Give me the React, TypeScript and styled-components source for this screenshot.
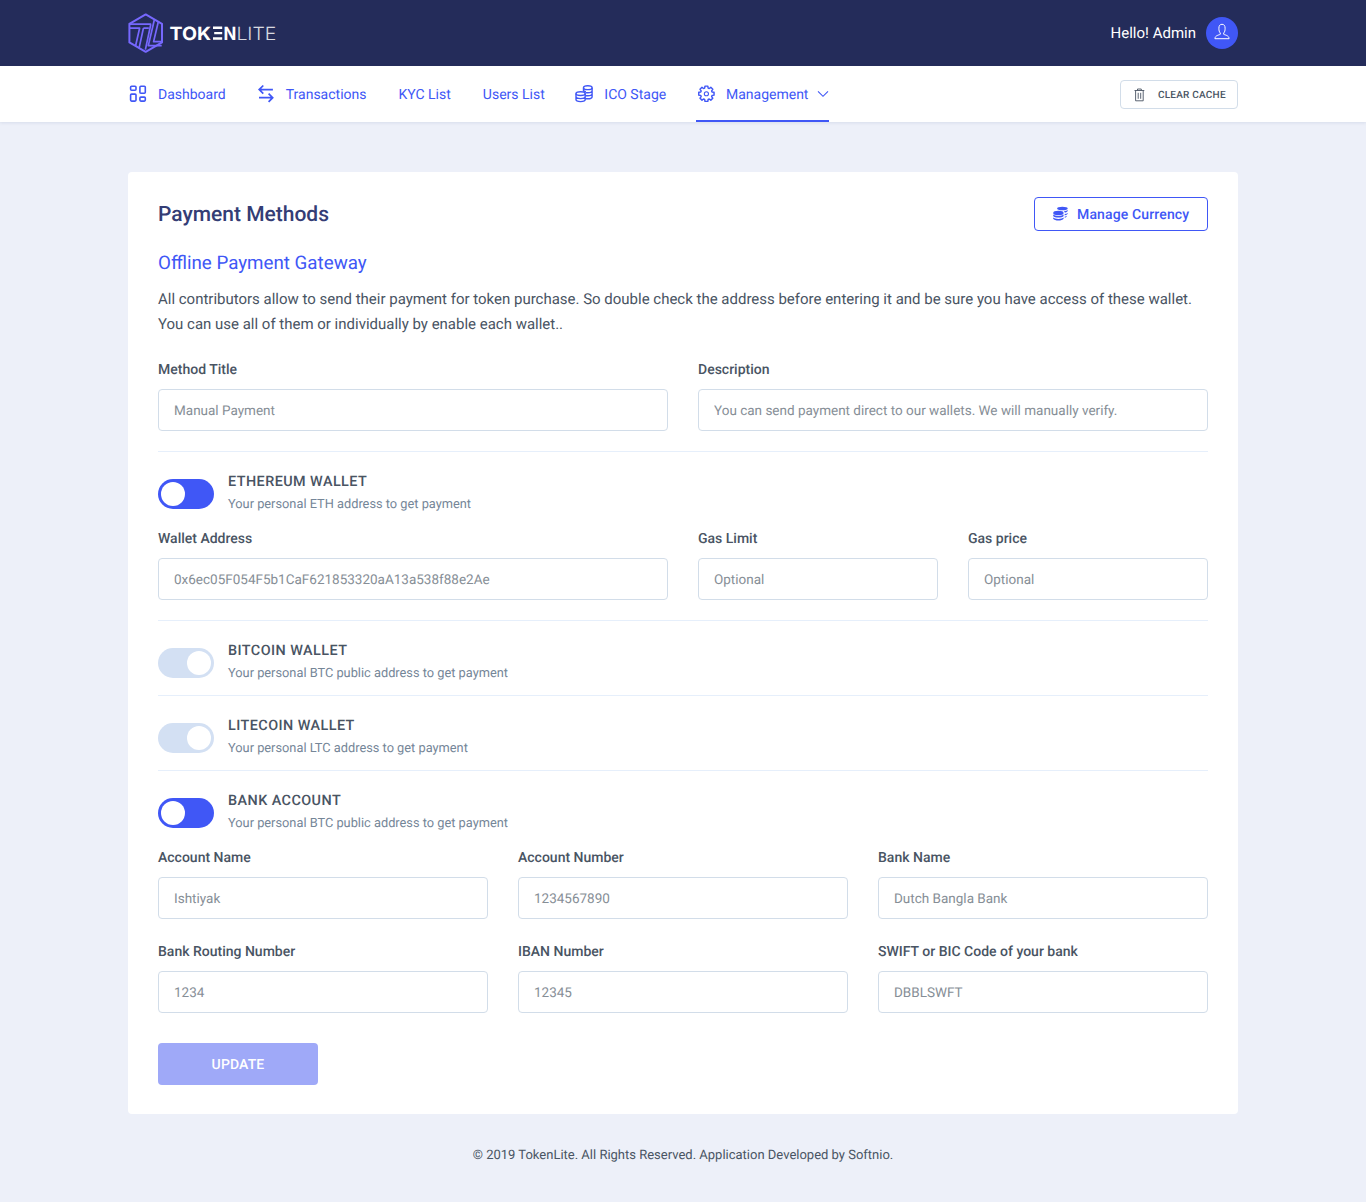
import React, { useState } from "react";
import styled, { createGlobalStyle } from "styled-components";

const blue = "#4057f6";
const ink = "#495463";

const GlobalStyle = createGlobalStyle`
  * { box-sizing: border-box; text-rendering: geometricPrecision; }
  body { margin: 0; background: #edf0f9; color: ${ink}; font-family: Roboto, sans-serif; font-size: 15px; }
  input, button { font-family: inherit; }
`;

const Container = styled.div`
  width: 1110px;
  margin: 0 auto;
  display: flex;
  align-items: center;
  justify-content: space-between;
  height: 100%;
`;
const TopBar = styled.header`
  height: 66px;
  background: #242c5a;
`;
const User = styled.div`
  display: flex;
  align-items: center;
  gap: 10px;
  color: #fff;
  font-size: 15px;
  line-height: 24px;
`;
const Avatar = styled.span`
  width: 32px;
  height: 32px;
  border-radius: 50%;
  background: ${blue};
  display: grid;
  place-items: center;
  padding-bottom: 2px;
`;
const NavBar = styled.nav`
  height: 56px;
  background: #fff;
  box-shadow: 0 1px 3px rgba(60, 80, 130, 0.12);
`;
const Menu = styled.ul`
  display: flex;
  list-style: none;
  margin: 0;
  padding: 0;
  height: 100%;
`;
const MenuItem = styled.li<{ $active?: boolean; $gap: number }>`
  display: flex;
  align-items: center;
  height: 56px;
  margin-right: ${(p) => p.$gap}px;
  border-bottom: 2px solid ${(p) => (p.$active ? blue : "transparent")};
  padding-top: 4px;
  color: ${blue};
  font-size: 14px;
  svg { flex: none; }
`;
const MenuIcon = styled.span`
  display: flex;
  width: 20px;
  margin: -2px 10px 0 0;
`;
const Chevron = styled.svg`
  margin: -2px 0 0 9px;
`;
const ClearButton = styled.button`
  display: flex;
  align-items: center;
  gap: 13px;
  width: 118px;
  height: 29px;
  padding: 2px 0 0 13px;
  border: 1px solid #d2dde9;
  border-radius: 4px;
  background: #fff;
  color: ${ink};
  font-size: 10px;
  font-weight: 500;
  letter-spacing: 0.22px;
`;
const Card = styled.main`
  width: 1110px;
  height: 942px;
  margin: 50px auto 0;
  padding: 25px 30px 0;
  border-radius: 4px;
  background: #fff;
`;
const CardHead = styled.div`
  display: flex;
  align-items: center;
  justify-content: space-between;
  height: 34px;
`;
const Title = styled.h1`
  margin: 0;
  color: #343d75;
  font-size: 21px;
  font-weight: 500;
  line-height: 36px;
  padding-top: 1px;
`;
const CurrencyButton = styled.button`
  display: flex;
  align-items: center;
  gap: 8.5px;
  width: 174px;
  height: 34px;
  padding: 2px 0 0 16.5px;
  border: 1px solid ${blue};
  border-radius: 4px;
  background: #fff;
  color: ${blue};
  font-size: 14px;
  font-weight: 500;
  letter-spacing: 0.14px;
  svg { margin-top: -2px; }
`;
const Subtitle = styled.h2`
  margin: 20px 0 0;
  color: ${blue};
  font-size: 18.75px;
  font-weight: 400;
  line-height: 24px;
`;
const Intro = styled.p`
  margin: 12px 0 22px;
  font-size: 14.99px;
  line-height: 25px;
`;
const Fields = styled.div<{ $columns: string; $top?: number; $bottom?: number }>`
  display: grid;
  grid-template-columns: ${(p) => p.$columns};
  gap: 22px 30px;
  margin-top: ${(p) => p.$top ?? 0}px;
  margin-bottom: ${(p) => p.$bottom ?? 20}px;
`;
const FieldBox = styled.label`
  display: flex;
  flex-direction: column;
  gap: 8px;
  min-width: 0;
`;
const FieldLabel = styled.span`
  font-size: 14px;
  font-weight: 500;
  line-height: 22px;
`;
const Input = styled.input`
  width: 100%;
  height: 42px;
  padding: 1px 15px 0;
  border: 1px solid #d2dde9;
  border-radius: 4px;
  background: #fff;
  color: ${ink};
  font-size: 13.5px;
  outline: none;
  &::placeholder { color: #868e96; opacity: 1; }
`;
const WalletRow = styled.div`
  display: flex;
  gap: 14px;
  height: 75px;
  padding-top: 19px;
  border-top: 1px solid #e6effb;
`;
const Switch = styled.button<{ $on: boolean }>`
  display: flex;
  justify-content: ${(p) => (p.$on ? "flex-start" : "flex-end")};
  width: 56px;
  height: 30px;
  margin-top: 8px;
  padding: 3px;
  border: 0;
  border-radius: 15px;
  background: ${(p) => (p.$on ? blue : "#d3e0f3")};
`;
const Knob = styled.span`
  width: 24px;
  height: 24px;
  border-radius: 50%;
  background: #fff;
`;
const WalletName = styled.h3`
  margin: 0;
  font-size: 14.4px;
  font-weight: 500;
  line-height: 21px;
  letter-spacing: 0.44px;
  text-transform: uppercase;
`;
const WalletNote = styled.p`
  margin: 3px 0 0;
  color: #758698;
  font-size: 12.8px;
  line-height: 20px;
`;
const UpdateButton = styled.button`
  width: 160px;
  height: 42px;
  padding: 2px 0 0;
  border: 0;
  border-radius: 4px;
  background: #9fa9f8;
  color: #fff;
  font-size: 14px;
  font-weight: 500;
  letter-spacing: 0.14px;
`;
const Footer = styled.footer`
  margin-top: 31px;
  text-align: center;
  font-size: 13px;
  line-height: 22px;
`;

const Logo = () => (
  <svg width="148" height="42" viewBox="0 0 148 42">
    <g fill="none" stroke="#7668fe" strokeWidth="2" strokeLinejoin="round">
      <path d="M17.7 2.4 34 11.8v18.6L17.7 39.8 1.4 30.4V11.8Z" />
      <path d="M1.8 12.2h21.4M1.8 16.2h9.8L7.6 33.8M15.4 16.2h5.4M15.4 16.2 11 36.4M26.3 8l-6 25.6h13.4M22.8 12.2 17.4 37.6M30.2 10.2l-4.6 19.4h8.2" strokeWidth="1.7" />
    </g>
    <g fill="#fff" fontFamily="Inter, sans-serif" fontSize="18.2">
      <text x="41.5" y="27.7" fontWeight="700" textLength="41.5" lengthAdjust="spacingAndGlyphs">TOK</text>
      <path d="M85 14.5h9.2v2.4h-9.2zM86.2 19.9h8v2.3h-8zM85 25.3h9.2v2.4h-9.2z" />
      <text x="95.6" y="27.7" fontWeight="700" textLength="12.8" lengthAdjust="spacingAndGlyphs">N</text>
      <text x="108.4" y="27.7" fontWeight="300" opacity=".82" textLength="40" lengthAdjust="spacingAndGlyphs">LITE</text>
    </g>
  </svg>
);

const PersonIcon = () => (
  <svg width="16" height="18" viewBox="0 0 16 18" fill="none" stroke="#fff" strokeWidth="1" strokeLinejoin="round">
    <path d="M6.3 11.3V10C5.2 8.9 4.9 7.6 4.9 5.2 4.9 2.6 6 1.3 8 1.3s3.1 1.3 3.1 3.9c0 2.4-.3 3.7-1.4 4.8v1.3c1.2.8 5.2.9 5.4 4.4H.9c.2-3.5 4.2-3.6 5.4-4.4Z" />
  </svg>
);

const DashboardIcon = () => (
  <svg width="20" height="20" viewBox="0 0 20 20" fill="none" stroke={blue} strokeWidth="1.6">
    <rect x="2.6" y="2.3" width="5.4" height="4" rx="1" />
    <rect x="11.9" y="2.3" width="5.4" height="7" rx="1" />
    <rect x="2.6" y="10.1" width="5.4" height="7" rx="1" />
    <rect x="11.9" y="13.1" width="5.4" height="4" rx="1" />
  </svg>
);

const TransferIcon = () => (
  <svg width="20" height="20" viewBox="0 0 20 20" fill="none" stroke={blue} strokeWidth="1.7">
    <path d="M16.9 5.6H3.2M7.3 1.5 3.2 5.6l4.1 4.1M3 13.7h13.9M12.6 9.6l4.1 4.1-4.1 4.1" />
  </svg>
);

const CoinsIcon = () => (
  <svg width="20" height="20" viewBox="0 0 20 20" fill="none" stroke={blue} strokeWidth="1.4">
    <g transform="translate(.6 0)">
      <ellipse cx="13.2" cy="3.7" rx="4.3" ry="1.9" />
      <path d="M8.9 3.7v4M17.5 3.7v9c0 1.2-1.6 2.1-4.3 2.1h-2.4M17.5 6.8c0 1.2-1.8 2-4.3 2-.9 0-1.5-.1-2.2-.3M17.5 9.8c0 1.2-1.8 2-4.3 2h-2M8.9 6.2c.4.8 1.2 1.3 2.4 1.5" />
      <ellipse cx="6" cy="9.6" rx="4.6" ry="1.9" />
      <path d="M1.4 9.6v5.9c0 1.3 1.9 2.1 4.6 2.1s4.6-.8 4.6-2.1V9.6M1.4 12.6c0 1.2 1.9 2 4.6 2s4.6-.8 4.6-2" />
    </g>
  </svg>
);

const GearIcon = () => (
  <svg width="20" height="20" viewBox="0 0 20 20" fill="none" stroke={blue} strokeWidth="1.75" strokeLinejoin="round">
    <g transform="translate(2.1 .7) scale(.83)">
      <path d="M8.3 1.7h3.4l.4 2.4 1.3.5 1.9-1.4 2.4 2.4-1.4 1.9.5 1.3 2.4.4v3.4l-2.4.4-.5 1.3 1.4 1.9-2.4 2.4-1.9-1.4-1.3.5-.4 2.4H8.3l-.4-2.4-1.3-.5-1.9 1.4-2.4-2.4 1.4-1.9-.5-1.3-2.4-.4V9.2l2.4-.4.5-1.3-1.4-1.9 2.4-2.4 1.9 1.4 1.3-.5Z" />
      <circle cx="10" cy="10.9" r="2.5" strokeWidth="1.3" />
    </g>
  </svg>
);

const TrashIcon = () => (
  <svg width="11" height="14" viewBox="0 0 11 14" fill="none" stroke={ink} strokeWidth=".9">
    <path d="M.5 2.5h9.8M3.5 2.3V1h3.8v1.3M1.6 2.7v10.1h7.6V2.7M4.2 4.8v6M6.7 4.8v6" />
  </svg>
);

const CoinStackIcon = () => (
  <svg width="17" height="16" viewBox="0 0 17 16" fill={blue}>
    <ellipse cx="10.4" cy="2.5" rx="5.3" ry="1.8" />
    <ellipse cx="6.4" cy="7" rx="5.2" ry="2.2" />
    <path d="M1.2 8.6c1.6 1.9 8.8 1.9 10.4 0v1.3c-1.2 2-9.2 2-10.4 0ZM1.2 11.5c1.6 1.9 8.8 1.9 10.4 0v1.2c-1.2 2.4-9.2 2.4-10.4 0ZM12 5.3c1.6-.2 2.9-.6 3.7-1.2v.8c-.4.8-1.4 1.4-2.9 1.7ZM12.7 8.1c1.3-.3 2.3-.6 3-1.2v.9c-.4.8-1.4 1.3-3 1.6ZM12.7 10.7c1-.2 1.7-.5 2.3-.9-.3 1-1.1 1.7-2.3 2Z" />
  </svg>
);

const Field = ({ label, hint }: { label: string; hint: string }) => (
  <FieldBox>
    <FieldLabel>{label}</FieldLabel>
    <Input placeholder={hint} />
  </FieldBox>
);

const Wallet = ({ name, note, enabled }: { name: string; note: string; enabled?: boolean }) => {
  const [on, setOn] = useState(!!enabled);
  return (
    <WalletRow>
      <Switch $on={on} role="switch" aria-checked={on} onClick={() => setOn(!on)}>
        <Knob />
      </Switch>
      <div>
        <WalletName>{name}</WalletName>
        <WalletNote>{note}</WalletNote>
      </div>
    </WalletRow>
  );
};

export default function App() {
  return (
    <>
      <GlobalStyle />
      <TopBar>
        <Container>
          <Logo />
          <User>
            Hello! Admin
            <Avatar><PersonIcon /></Avatar>
          </User>
        </Container>
      </TopBar>
      <NavBar>
        <Container>
          <Menu>
            <MenuItem $gap={30}><MenuIcon><DashboardIcon /></MenuIcon>Dashboard</MenuItem>
            <MenuItem $gap={32}><MenuIcon><TransferIcon /></MenuIcon>Transactions</MenuItem>
            <MenuItem $gap={32}>KYC List</MenuItem>
            <MenuItem $gap={29.6}>Users List</MenuItem>
            <MenuItem $gap={29.8}><MenuIcon><CoinsIcon /></MenuIcon>ICO Stage</MenuItem>
            <MenuItem $gap={0} $active>
              <MenuIcon><GearIcon /></MenuIcon>Management
              <Chevron width="12" height="8" viewBox="0 0 12 8" fill="none" stroke={blue} strokeWidth="1.1">
                <path d="m1 1.3 5 5 5-5" />
              </Chevron>
            </MenuItem>
          </Menu>
          <ClearButton><TrashIcon />CLEAR CACHE</ClearButton>
        </Container>
      </NavBar>
      <Card>
        <CardHead>
          <Title>Payment Methods</Title>
          <CurrencyButton><CoinStackIcon />Manage Currency</CurrencyButton>
        </CardHead>
        <Subtitle>Offline Payment Gateway</Subtitle>
        <Intro>
          All contributors allow to send their payment for token purchase. So double check the address before entering it and be sure you have access of these wallet.
          <br />
          You can use all of them or individually by enable each wallet..
        </Intro>
        <Fields $columns="1fr 1fr">
          <Field label="Method Title" hint="Manual Payment" />
          <Field label="Description" hint="You can send payment direct to our wallets. We will manually verify." />
        </Fields>
        <Wallet name="Ethereum Wallet" note="Your personal ETH address to get payment" enabled />
        <Fields $columns="510px 1fr 1fr" $top={2}>
          <Field label="Wallet Address" hint="0x6ec05F054F5b1CaF621853320aA13a538f88e2Ae" />
          <Field label="Gas Limit" hint="Optional" />
          <Field label="Gas price" hint="Optional" />
        </Fields>
        <Wallet name="Bitcoin Wallet" note="Your personal BTC public address to get payment" />
        <Wallet name="Litecoin Wallet" note="Your personal LTC address to get payment" />
        <Wallet name="Bank Account" note="Your personal BTC public address to get payment" enabled />
        <Fields $columns="repeat(3, 1fr)" $top={2} $bottom={30}>
          <Field label="Account Name" hint="Ishtiyak" />
          <Field label="Account Number" hint="1234567890" />
          <Field label="Bank Name" hint="Dutch Bangla Bank" />
          <Field label="Bank Routing Number" hint="1234" />
          <Field label="IBAN Number" hint="12345" />
          <Field label="SWIFT or BIC Code of your bank" hint="DBBLSWFT" />
        </Fields>
        <UpdateButton>UPDATE</UpdateButton>
      </Card>
      <Footer>© 2019 TokenLite. All Rights Reserved. Application Developed by Softnio.</Footer>
    </>
  );
}
